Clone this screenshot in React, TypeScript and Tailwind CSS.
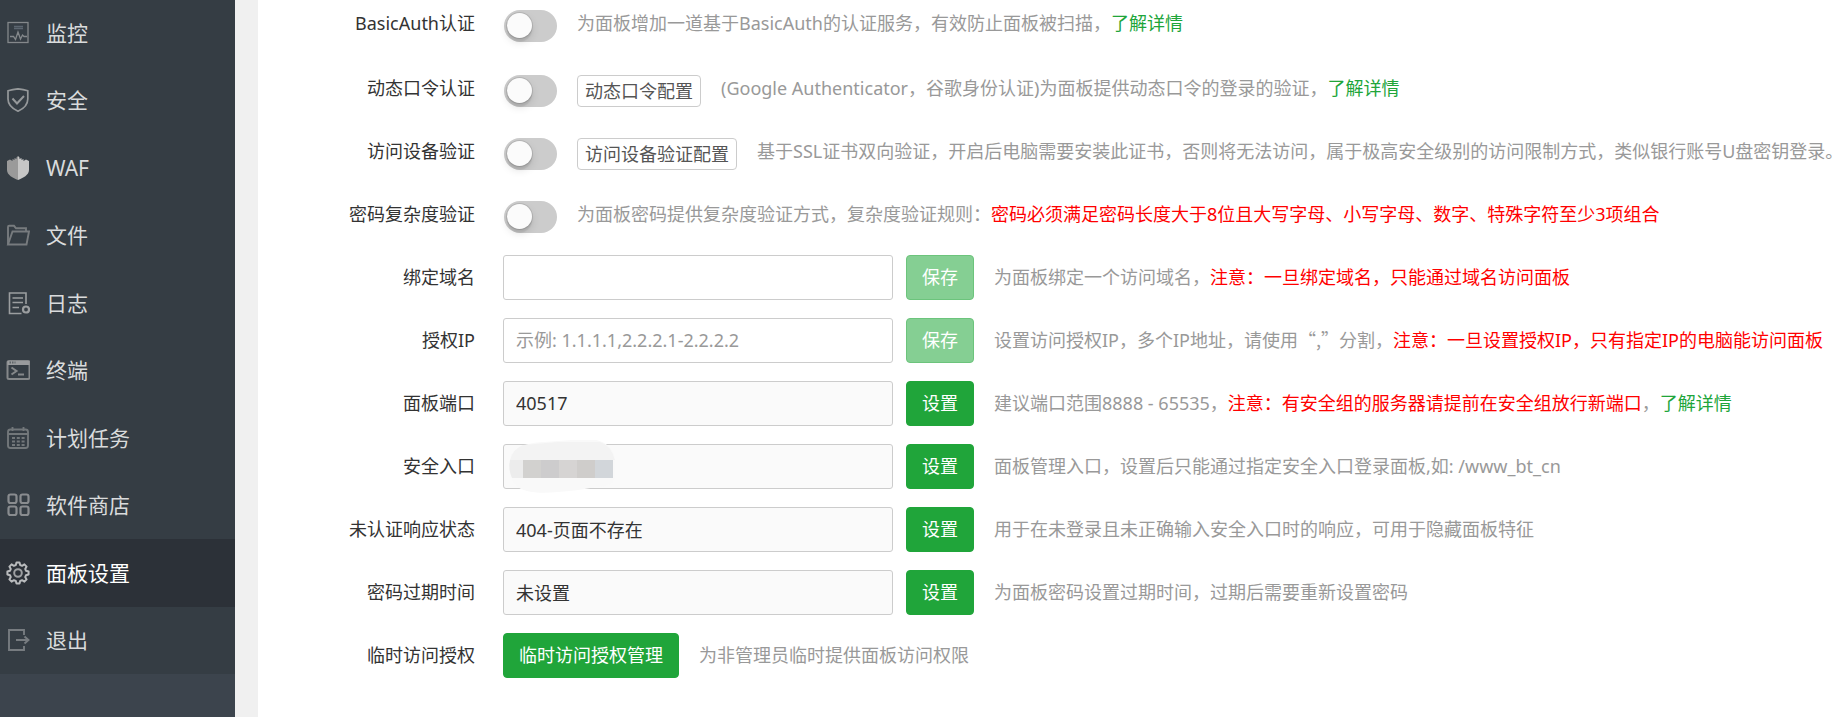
import React, { useState } from "react";

type IconName =
  | "monitor"
  | "security"
  | "waf"
  | "files"
  | "logs"
  | "terminal"
  | "cron"
  | "soft"
  | "config"
  | "logout";

const menu: { icon: IconName; text: string }[] = [
  { icon: "monitor", text: "监控" },
  { icon: "security", text: "安全" },
  { icon: "waf", text: "WAF" },
  { icon: "files", text: "文件" },
  { icon: "logs", text: "日志" },
  { icon: "terminal", text: "终端" },
  { icon: "cron", text: "计划任务" },
  { icon: "soft", text: "软件商店" },
  { icon: "config", text: "面板设置" },
  { icon: "logout", text: "退出" },
];

function MenuIcon({ name }: { name: IconName }) {
  const shapes: Record<IconName, React.ReactNode> = {
    monitor: (
      <g stroke="#84888b">
        <rect x="2" y="1.5" width="20" height="20" strokeWidth="1.3" />
        <path d="M8 5.500h9M8 7.500h9" stroke="#5c6670" strokeWidth="1.600" />
        <path
          d="M4 15.500h3.500l2 3L12 11l2.500 7 2-4 1.500 1.500H21"
          strokeWidth="1.300"
        />
      </g>
    ),
    security: (
      <g stroke="#95989a" strokeWidth="1.700">
        <path d="M12 .8C9 1.200 5 2 2 2.800V11c0 6 5 10 10 12.200C17 21 21.800 17 21.800 11V2.800C19 2 15 1.200 12 .8z" />
        <path d="M6.500 10.500l4.500 5 7-7.500" strokeWidth="2" />
      </g>
    ),
    waf: (
      <g stroke="none">
        <path
          d="M12 0L10.500 1.500V3L8.500 2v2L6.500 3v2L4 3.500 1 5v9c0 5 6 8 11 10z"
          fill="#9a9a9a"
        />
        <path
          d="M12 0l1.500 1.500V3l2-1v2l2-1v2L20 3.500 23 5v9c0 5-6 8-11 10z"
          fill="#c6c6c6"
        />
      </g>
    ),
    files: (
      <g stroke="#777b7e" strokeWidth="1.900">
        <path d="M2 21V4q0-1.200 1.200-1.200H8l2 2.500h10V9" />
        <path d="M6.500 8.500H23L20.500 21.500H2L6.500 8.500z" />
      </g>
    ),
    logs: (
      <g stroke="#9b9ea0" strokeWidth="1.600">
        <path d="M20 13V2H3.500v20.500h12M6.500 7h10.500M6.500 11.500h10.500M6.500 16.500h6.500" />
        <circle cx="20" cy="18.500" r="3" strokeWidth="2.200" />
      </g>
    ),
    terminal: (
      <g stroke="#85888a" strokeWidth="2">
        <rect x="1.500" y="3" width="22" height="18" rx="1.500" />
        <path d="M1.500 5h22" stroke="#999b9d" strokeWidth="4" />
        <path d="M3.500 4.500h6" stroke="#5e6468" strokeDasharray="1.500 1" />
        <path d="M5.500 9.500l5 3.500-5 3.500M12 16.500h6" />
      </g>
    ),
    cron: (
      <g stroke="#72777a" strokeWidth="1.900">
        <rect x="2" y="3.500" width="20" height="18.500" rx="2.500" />
        <path d="M6.500 1v4M17.500 1v4M2 8h20" />
        <path
          d="M6 12h13M6 15.500h13M6 19h13"
          strokeWidth="2"
          strokeDasharray="3 1.800"
        />
      </g>
    ),
    soft: (
      <g stroke="#898c8f" strokeWidth="2.200">
        <rect x="2.500" y="1.500" width="8" height="8.500" rx="2" />
        <rect x="14.500" y="1.500" width="8" height="8.500" rx="2" />
        <rect x="2.500" y="13.500" width="8" height="8.500" rx="2" />
        <rect x="14.500" y="13.500" width="8" height="8.500" rx="2" />
      </g>
    ),
    config: (
      <g stroke="#b9bbbd" strokeWidth="2" strokeLinejoin="round">
        <path d="M10.500 1.400h3L14.200 4 16.100 4.800 18.400 3.400 20.600 5.600 19.200 7.900 20 9.800 22.600 10.500v3L20 14.200 19.200 16.100 20.600 18.400 18.400 20.600 16.100 19.200 14.200 20 13.500 22.600h-3L9.800 20 7.900 19.200 5.600 20.600 3.400 18.400 4.800 16.100 4 14.200 1.400 13.500v-3L4 9.800 4.800 7.900 3.400 5.600 5.600 3.400 7.900 4.800 9.800 4z" />
        <circle cx="12" cy="12" r="3.800" stroke="#9ea0a3" />
      </g>
    ),
    logout: (
      <g stroke="#777c80" strokeWidth="1.900">
        <path d="M18 7V2H3v20h15v-4" />
        <path d="M10 12h12M18.500 8.500L22.500 12l-4 3.500" />
      </g>
    ),
  };

  return (
    <svg
      viewBox="0 0 24 24"
      className="w-6 h-6 shrink-0"
      fill="none"
      aria-hidden="true"
    >
      {shapes[name]}
    </svg>
  );
}

function Row({
  label,
  htmlFor,
  children,
}: {
  label: string;
  htmlFor: string;
  children: React.ReactNode;
}) {
  return (
    <div className="flex items-center min-h-[45px] whitespace-nowrap">
      <label
        htmlFor={htmlFor}
        className="w-[217px] shrink-0 text-right mr-7 pb-0.5"
      >
        {label}
      </label>
      {children}
    </div>
  );
}

function Switch({ id }: { id: string }) {
  const [checked, setChecked] = useState<boolean>(false);

  return (
    <span className="relative flex w-[53px] h-8 mt-1 ml-px mr-5 shrink-0">
      <input
        id={id}
        type="checkbox"
        role="switch"
        checked={checked}
        onChange={() => setChecked(!checked)}
        className="peer appearance-none w-full h-full rounded-full bg-[#ccc] checked:bg-[#20a53a] cursor-pointer"
      />
      <span className="absolute left-[3px] top-[3px] size-[25px] rounded-full bg-[#fbfbfb] shadow-[0_0_0_1px_rgba(0,0,0,0.1),0_4px_0_rgba(0,0,0,0.04),0_4px_9px_rgba(0,0,0,0.13),0_3px_3px_rgba(0,0,0,0.05)] pointer-events-none peer-checked:translate-x-[21px]" />
    </span>
  );
}

function ConfigButton({ children }: { children: React.ReactNode }) {
  return (
    <button
      type="button"
      className="h-8 mt-1 mr-5 px-[7px] shrink-0 rounded border border-[#ccc] bg-white text-[#555] leading-none"
    >
      {children}
    </button>
  );
}

function TextBox({
  id,
  value = "",
  placeholder,
  readOnly,
}: {
  id: string;
  value?: string;
  placeholder?: string;
  readOnly?: boolean;
}) {
  return (
    <input
      id={id}
      type="text"
      defaultValue={value}
      placeholder={placeholder}
      readOnly={readOnly}
      className="w-[390px] h-[45px] px-3 pb-0.5 rounded-[3px] border border-[#ccc] bg-white read-only:bg-[#fafafa] text-[#333] placeholder:text-[#999] outline-none"
    />
  );
}

function GreenButton({
  children,
  disabled,
}: {
  children: React.ReactNode;
  disabled?: boolean;
}) {
  return (
    <button
      type="button"
      disabled={disabled}
      className="h-[45px] px-[15px] pb-0.5 mr-5 shrink-0 rounded border border-[#20a53a] bg-[#20a53a] text-white disabled:bg-[#85cf93] disabled:border-[#6cc47c]"
    >
      {children}
    </button>
  );
}

function Tip({ children }: { children: React.ReactNode }) {
  return <p className="pb-0.5 text-[#999]">{children}</p>;
}

function Warn({ children }: { children: React.ReactNode }) {
  return <span className="text-[#f00]">{children}</span>;
}

function More() {
  return (
    <a href="#help" className="text-[#20a53a]">
      了解详情
    </a>
  );
}

// Pixelated cover over the secret entrance path
function Mosaic() {
  return (
    <svg
      viewBox="0 0 110 54"
      className="absolute left-[5px] -top-[4px] w-[110px] h-[54px]"
      aria-hidden="true"
    >
      <path
        d="M1 28C1 12 10 3 36 2L64 0H88C98 2 105 8 107 20V36C107 44 98 47 88 47C76 49 66 51 50 52C30 54 14 52 9 46C3 40 1 34 1 28z"
        fill="#f9f9f9"
      />
      <path d="M15 5L50 2H92Q103 5 107 20H2Q5 9 15 5z" fill="#f3f3f3" />
      <path d="M2 20h13v18H4Q0 29 2 20z" fill="#ececec" />
      <rect x="15" y="20" width="18" height="18" fill="#d2d1cf" />
      <rect x="33" y="20" width="18" height="18" fill="#cdcccd" />
      <rect x="51" y="20" width="18" height="18" fill="#d6d4d3" />
      <rect x="69" y="20" width="18" height="18" fill="#cfcdcb" />
      <rect x="87" y="20" width="18" height="18" fill="#d2d6da" />
    </svg>
  );
}

export default function App() {
  const [active, setActive] = useState<string>("面板设置");

  return (
    <div
      lang="zh-CN"
      className="flex min-h-screen bg-[#f0f0f0] font-['Noto_Sans','Noto_Sans_CJK_SC',sans-serif] text-[18px] leading-[26px] text-[#333] overflow-hidden"
    >
      <nav className="w-[235px] shrink-0 flex flex-col bg-[#3c444d] pb-[43px]">
        <ul className="flex-1 flex flex-col -mt-px bg-[#353d44]">
          {menu.map((item) => (
            <li key={item.text} className="flex-1 flex">
              <a
                href="#menu"
                onClick={() => setActive(item.text)}
                className={
                  active === item.text
                    ? "flex-1 flex items-center gap-4 pl-1.5 text-[21px] bg-[#2c3138] text-white"
                    : "flex-1 flex items-center gap-4 pl-1.5 text-[21px] text-[#d9dbdc]"
                }
              >
                <MenuIcon name={item.icon} />
                {item.text}
              </a>
            </li>
          ))}
        </ul>
      </nav>
      <main className="flex-1 min-w-0 ml-[23px] bg-white">
        <form className="flex flex-col gap-[18px] pt-px">
          <div className="pb-0.5">
            <Row label="BasicAuth认证" htmlFor="basicAuth">
              <Switch id="basicAuth" />
              <Tip>
                为面板增加一道基于BasicAuth的认证服务，有效防止面板被扫描，
                <More />
              </Tip>
            </Row>
          </div>
          <Row label="动态口令认证" htmlFor="otp">
            <Switch id="otp" />
            <ConfigButton>动态口令配置</ConfigButton>
            <Tip>
              (Google Authenticator，谷歌身份认证)为面板提供动态口令的登录的验证，
              <More />
            </Tip>
          </Row>
          <Row label="访问设备验证" htmlFor="device">
            <Switch id="device" />
            <ConfigButton>访问设备验证配置</ConfigButton>
            <Tip>
              基于SSL证书双向验证，开启后电脑需要安装此证书，否则将无法访问，属于极高安全级别的访问限制方式，类似银行账号U盘密钥登录。
            </Tip>
          </Row>
          <Row label="密码复杂度验证" htmlFor="complexity">
            <Switch id="complexity" />
            <Tip>
              为面板密码提供复杂度验证方式，复杂度验证规则：
              <Warn>
                密码必须满足密码长度大于8位且大写字母、小写字母、数字、特殊字符至少3项组合
              </Warn>
            </Tip>
          </Row>
          <Row label="绑定域名" htmlFor="domain">
            <div className="flex mr-[13px]">
              <TextBox id="domain" />
            </div>
            <GreenButton disabled>保存</GreenButton>
            <Tip>
              为面板绑定一个访问域名，
              <Warn>注意：一旦绑定域名，只能通过域名访问面板</Warn>
            </Tip>
          </Row>
          <Row label="授权IP" htmlFor="limitIp">
            <div className="flex mr-[13px]">
              <TextBox id="limitIp" placeholder="示例: 1.1.1.1,2.2.2.1-2.2.2.2" />
            </div>
            <GreenButton disabled>保存</GreenButton>
            <Tip>
              设置访问授权IP，多个IP地址，请使用
              <span className="font-['Noto_Sans_CJK_SC',sans-serif]">“,”</span>
              分割，
              <Warn>注意：一旦设置授权IP，只有指定IP的电脑能访问面板</Warn>
            </Tip>
          </Row>
          <Row label="面板端口" htmlFor="port">
            <div className="flex mr-[13px]">
              <TextBox id="port" value="40517" readOnly />
            </div>
            <GreenButton>设置</GreenButton>
            <Tip>
              建议端口范围8888 - 65535，
              <Warn>注意：有安全组的服务器请提前在安全组放行新端口</Warn>，
              <More />
            </Tip>
          </Row>
          <Row label="安全入口" htmlFor="entrance">
            <div className="relative flex mr-[13px]">
              <TextBox id="entrance" readOnly />
              <Mosaic />
            </div>
            <GreenButton>设置</GreenButton>
            <Tip>
              面板管理入口，设置后只能通过指定安全入口登录面板,如: /www_bt_cn
            </Tip>
          </Row>
          <Row label="未认证响应状态" htmlFor="status">
            <div className="flex mr-[13px]">
              <TextBox id="status" value="404-页面不存在" readOnly />
            </div>
            <GreenButton>设置</GreenButton>
            <Tip>用于在未登录且未正确输入安全入口时的响应，可用于隐藏面板特征</Tip>
          </Row>
          <Row label="密码过期时间" htmlFor="expire">
            <div className="flex mr-[13px]">
              <TextBox id="expire" value="未设置" readOnly />
            </div>
            <GreenButton>设置</GreenButton>
            <Tip>为面板密码设置过期时间，过期后需要重新设置密码</Tip>
          </Row>
          <Row label="临时访问授权" htmlFor="temp">
            <GreenButton>临时访问授权管理</GreenButton>
            <Tip>为非管理员临时提供面板访问权限</Tip>
          </Row>
        </form>
      </main>
    </div>
  );
}
